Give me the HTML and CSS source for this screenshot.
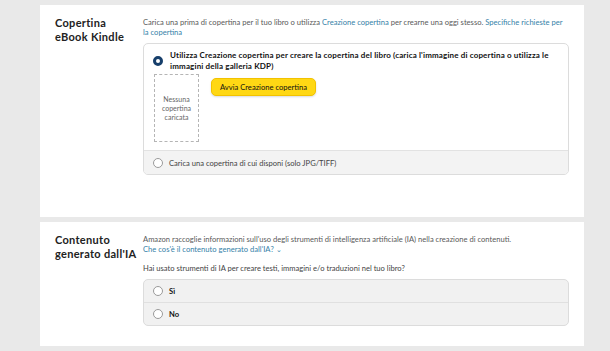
FILE: index.html
```html
<!DOCTYPE html>
<html lang="it">
<head>
  <meta charset="UTF-8" />
  <title>Copertina eBook Kindle</title>
  <link rel="stylesheet" href="styles.css">
</head>
<body>
  <div class="page">
    <section class="panel panel-cover">
      <h3 class="panel-title">Copertina<br>eBook Kindle</h3>
      <div class="panel-body">
        <p class="desc">Carica una prima di copertina per il tuo libro o utilizza <a href="#">Creazione copertina</a> per crearne una oggi stesso. <a href="#">Specifiche richieste per la</a> <a href="#">copertina</a></p>

        <div class="choice-card">
          <div class="choice choice-main">
            <span class="radio checked"></span>
            <div class="choice-content">
              <div class="choice-label">Utilizza Creazione copertina per creare la copertina del libro (carica l'immagine di copertina o utilizza le immagini della galleria KDP)</div>
              <div class="creator-row">
                <div class="cover-empty">Nessuna copertina caricata</div>
                <button class="btn-yellow">Avvia Creazione copertina</button>
              </div>
            </div>
          </div>
          <div class="choice choice-alt">
            <span class="radio"></span>
            <span class="choice-text">Carica una copertina di cui disponi (solo JPG/TIFF)</span>
          </div>
        </div>
      </div>
    </section>

    <section class="panel panel-ai">
      <h3 class="panel-title">Contenuto<br>generato dall'IA</h3>
      <div class="panel-body">
        <p class="desc">Amazon raccoglie informazioni sull'uso degli strumenti di intelligenza artificiale (IA) nella creazione di contenuti.<br><a href="#">Che cos'è il contenuto generato dall'IA? <span class="caret">⌄</span></a></p>
        <p class="question">Hai usato strumenti di IA per creare testi, immagini e/o traduzioni nel tuo libro?</p>
        <div class="options">
          <div class="option"><span class="radio"></span><b>Sì</b></div>
          <div class="option"><span class="radio"></span><b>No</b></div>
        </div>
      </div>
    </section>
  </div>
</body>
</html>
```

FILE: styles.css
```css
body {
  margin: 0;
  background-color: #e9e9e9;
  color: #111;
  font-family: 'Lato', 'Liberation Sans', sans-serif;
}

.page {
  width: 544px;
  margin-left: 40px;
  padding-top: 5px;
}

.panel {
  display: flex;
  background-color: #fff;
  margin-bottom: 5px;
}

.panel-cover {
  height: 212px;
}

.panel-ai {
  height: 124px;
}

.panel-title {
  width: 88px;
  margin: 0;
  padding: 11px 0 0 15px;
  font-size: 11px;
  font-weight: 700;
  line-height: 13.5px;
  letter-spacing: 0.3px;
  color: #222;
}

.panel-body {
  flex: 1;
  padding: 12px 15px 0 0;
}

.desc {
  margin: 0;
  font-size: 7.6px;
  line-height: 10px;
  color: #5a5a5a;
}

a {
  color: #3581a8;
  text-decoration: none;
}

.caret {
  font-size: 7px;
}

.choice-card {
  margin-top: 6px;
  border: 1px solid #dcdcdc;
  border-radius: 5px;
  overflow: hidden;
}

.choice {
  display: flex;
  align-items: flex-start;
  padding: 0 9px;
}

.choice-main {
  padding-top: 6px;
  padding-bottom: 8px;
}

.choice-alt {
  align-items: center;
  height: 23px;
  background-color: #f3f3f3;
  border-top: 1px solid #e2e2e2;
}

.radio {
  flex: none;
  width: 8px;
  height: 8px;
  border: 1px solid #9a9a9a;
  border-radius: 50%;
  background-color: #fff;
  margin-right: 6px;
}

.radio.checked {
  width: 4px;
  height: 4px;
  border: 3px solid #173f6b;
  margin-top: 6px;
  margin-right: 7px;
}

.choice-content {
  flex: 1;
}

.choice-label {
  font-size: 8px;
  font-weight: 700;
  line-height: 11px;
  letter-spacing: 0.15px;
  color: #111;
}

.creator-row {
  display: flex;
  align-items: flex-start;
  gap: 12px;
  margin-top: 2px;
  margin-left: -16px;
}

.cover-empty {
  width: 37px;
  height: 60px;
  padding: 3px;
  border: 1px dashed #b5b5b5;
  display: flex;
  align-items: center;
  justify-content: center;
  text-align: center;
  font-size: 7px;
  line-height: 9px;
  color: #666;
}

.btn-yellow {
  margin-top: 4px;
  height: 18px;
  padding: 0 8px;
  background-color: #ffd814;
  border: 1px solid #f2c200;
  border-radius: 5px;
  box-shadow: 0 1px 2px rgba(15, 17, 17, 0.15);
  font-family: inherit;
  font-size: 7.6px;
  color: #111;
}

.choice-text {
  font-size: 7.6px;
  color: #444;
}

.question {
  margin: 9px 0 0;
  font-size: 7.6px;
  color: #444;
}

.options {
  margin-top: 6px;
  border: 1px solid #dcdcdc;
  border-radius: 5px;
  background-color: #f1f1f1;
}

.option {
  display: flex;
  align-items: center;
  height: 22px;
  padding: 0 9px;
  font-size: 7.6px;
}

.option + .option {
  border-top: 1px solid #e0e0e0;
}
```
